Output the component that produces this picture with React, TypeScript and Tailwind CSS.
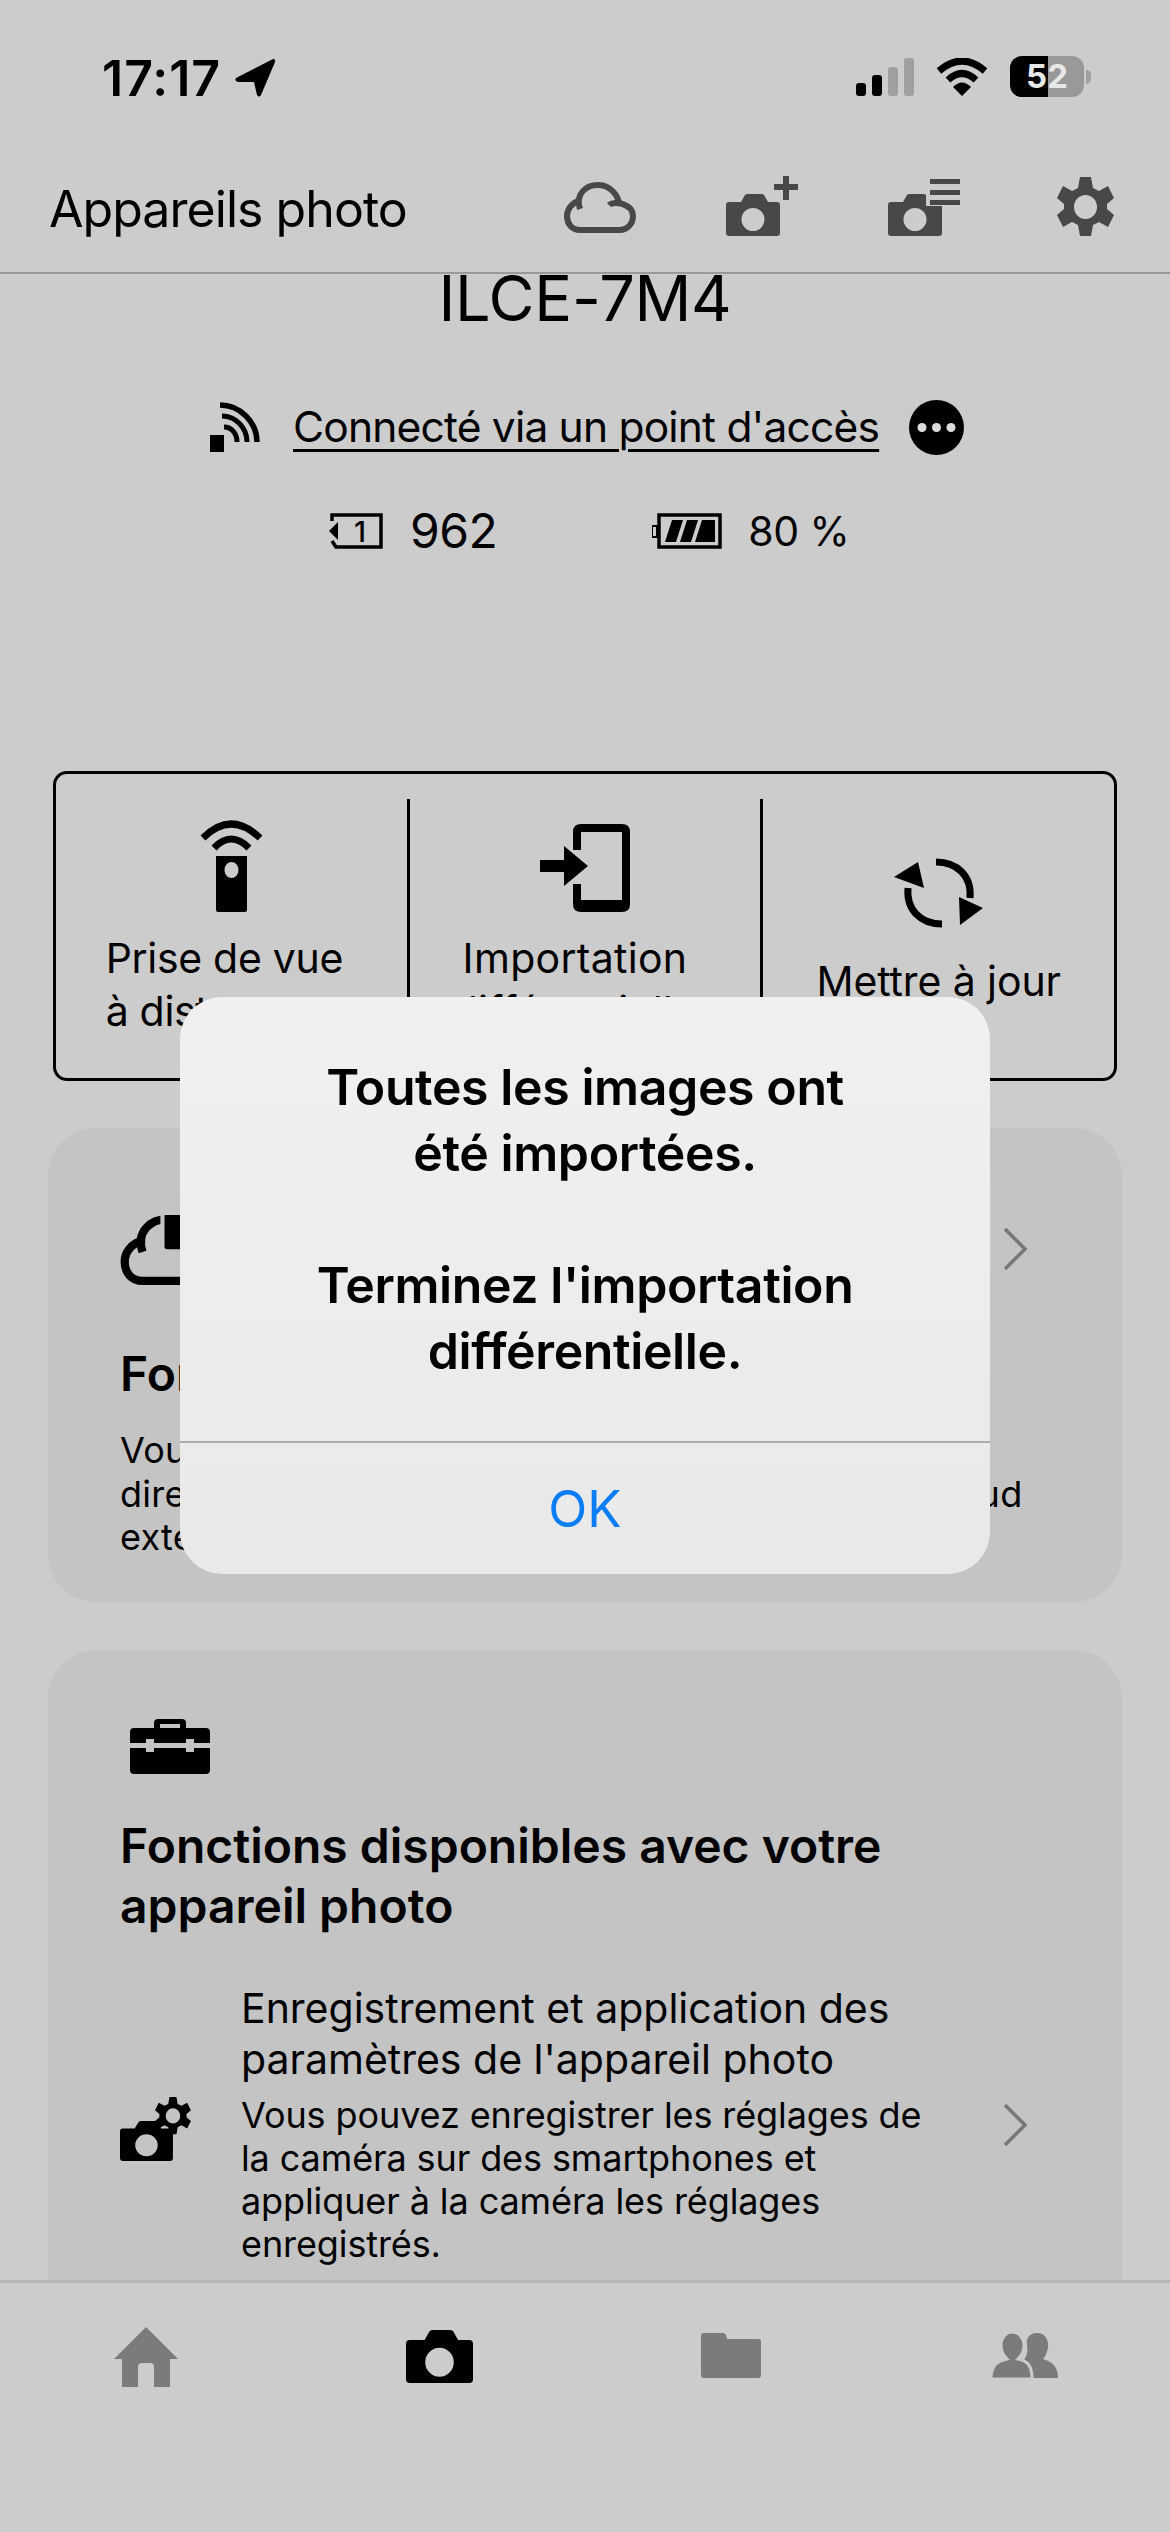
import type { ReactNode } from 'react';

function StatusBar() {
  return (
    <div className="flex h-[156px] items-start justify-between pl-[102px] pr-[79px] pt-[54px]">
      <div className="flex items-center gap-[14px]">
        <span className="text-[50px] font-semibold leading-[48px] tracking-[1px] text-black">17:17</span>
        <svg width="41" height="38" viewBox="0 0 41 38">
          <path d="M38 0 L1 19 Q-1 22 3 23 L19 23 L22 36 Q24 39 26 36 L40 3 Q41 0 38 0Z" fill="#000" />
        </svg>
      </div>
      <div className="flex items-center pt-[2px]">
        <svg width="58" height="38" viewBox="0 0 58 38">
          <rect x="0" y="25" width="10" height="13" rx="3" fill="#000" />
          <rect x="16" y="17" width="10" height="21" rx="3" fill="#000" />
          <rect x="32" y="9" width="10" height="29" rx="3" fill="#a0a0a0" />
          <rect x="48" y="0" width="10" height="38" rx="3" fill="#a0a0a0" />
        </svg>
        <svg className="ml-[22px]" width="52" height="38" viewBox="0 0 52 38">
          <path d="M3 13 Q26 -7 49 13" fill="none" stroke="#000" strokeWidth="7" />
          <path d="M12 22 Q26 9 40 22" fill="none" stroke="#000" strokeWidth="7" />
          <path d="M26 38 L17 29 Q26 20 35 29Z" fill="#000" />
        </svg>
        <div className="relative ml-[22px] flex h-[41px] w-[74px] overflow-hidden rounded-[12px] bg-[#999999]">
          <div className="w-[38px] bg-black" />
          <span className="absolute inset-0 text-center text-[33px] font-bold leading-[41px] text-[#e8e8e8]">52</span>
        </div>
        <div className="ml-[2px] h-[14px] w-[5px] rounded-r-full bg-[#a0a0a0]" />
      </div>
    </div>
  );
}

function CloudShape() {
  return (
    <g fill="none" stroke="currentColor" strokeWidth="6">
      <path d="M45 23 C50 18 69 22 69 34 C69 42 63 48 56 48 H16 C8 48 3 42 3 34 C3 27 8 21 15 19" />
      <path d="M16 27 C11 12 22 3 34 3 C44 3 52 10 55 20" />
    </g>
  );
}

function Camera({ color }: { color: string }) {
  return (
    <path
      fillRule="evenodd"
      fill={color}
      d="M3 8 H15 L19 1 Q20 0 22 0 H35 Q37 0 38 1 L42 8 H51 Q54 8 54 11 V39 Q54 42 51 42 H3 Q0 42 0 39 V11 Q0 8 3 8Z M27 14 A11.5 11.5 0 1 0 27 37 A11.5 11.5 0 1 0 27 14Z"
    />
  );
}

const gearPath =
  'M23 0 H34 L36 11 L42 14 L51 9 L57 21 L50 27 V32 L57 38 L51 50 L42 45 L36 48 L34 59 H23 L21 48 L15 45 L6 50 L0 38 L7 32 V27 L0 21 L6 9 L15 14 L21 11Z M28.5 18 A11.5 12 0 1 0 28.5 42 A11.5 12 0 1 0 28.5 18Z';

function TopBar() {
  return (
    <div className="flex h-[118px] items-start border-b-[2px] border-[#999999] pl-[49px]">
      <span className="w-[358px] whitespace-nowrap pt-[23px] text-[50px] leading-[60px] tracking-[-0.95px] text-black">
        Appareils photo
      </span>
      <div className="ml-[157px] flex items-start text-[#484848]">
        <svg className="mt-[26px]" width="72" height="51" viewBox="0 0 72 51">
          <CloudShape />
        </svg>
        <svg className="ml-[90px] mt-[20px]" width="72" height="60" viewBox="0 0 72 60">
          <g transform="translate(0 18)">
            <Camera color="#484848" />
          </g>
          <path d="M48 8 H72 V14 H63 V24 H57 V14 H48Z M57 0 H63 V8 H57Z" fill="#484848" />
        </svg>
        <svg className="ml-[90px] mt-[23px]" width="72" height="57" viewBox="0 0 72 57">
          <g transform="translate(0 15)">
            <Camera color="#484848" />
          </g>
          <rect x="38" y="0" width="34" height="27" fill="#cccccc" />
          <rect x="42" y="0" width="30" height="5" fill="#484848" />
          <rect x="42" y="11" width="30" height="5" fill="#484848" />
          <rect x="42" y="21" width="30" height="5" fill="#484848" />
        </svg>
        <svg className="ml-[97px] mt-[21px]" width="57" height="59" viewBox="0 0 57 59">
          <path fillRule="evenodd" fill="#484848" d={gearPath} />
        </svg>
      </div>
    </div>
  );
}

function ActionCell({ children, label, labelClass }: { children: ReactNode; label: ReactNode; labelClass: string }) {
  return (
    <div className="flex flex-1 flex-col items-center">
      {children}
      <div className={`text-[41px] leading-[53px] text-black ${labelClass}`}>{label}</div>
    </div>
  );
}

function ActionBox() {
  return (
    <div className="mx-[53px] mt-[211px] flex h-[310px] rounded-[14px] border-[3px] border-black py-[25px]">
      <ActionCell
        labelClass="mr-[14px] text-left tracking-[-0.3px]"
        label={
          <>
            Prise de vue
            <br />à distance
          </>
        }
      >
        <svg className="mb-[20px] mt-[21px]" width="63" height="92" viewBox="0 0 63 92">
          <path d="M3 18 Q31 -10 60 18" fill="none" stroke="#000" strokeWidth="7" />
          <path d="M14 28 Q31 10 49 28" fill="none" stroke="#000" strokeWidth="7" />
          <path
            fillRule="evenodd"
            fill="#000"
            d="M16 36 H47 V90 Q47 92 45 92 H18 Q16 92 16 90Z M31.5 42 A7 8 0 1 0 31.5 58 A7 8 0 1 0 31.5 42Z"
          />
        </svg>
      </ActionCell>
      <div className="w-[3px] bg-black" />
      <ActionCell
        labelClass="mr-[20px] text-center tracking-[0.3px]"
        label={
          <>
            Importation
            <br />
            différentielle
          </>
        }
      >
        <svg className="mb-[20px] mt-[25px]" width="90" height="88" viewBox="0 0 90 88">
          <path d="M33 26 V8 Q33 0 41 0 H82 Q90 0 90 8 V80 Q90 88 82 88 H41 Q33 88 33 80 V60 H41 V76 H82 V8 H41 V26Z" fill="#000" />
          <path d="M0 36 H24 V22 L48 42 L24 62 V48 H0Z" fill="#000" />
        </svg>
      </ActionCell>
      <div className="w-[3px] bg-black" />
      <ActionCell labelClass="text-center tracking-[-0.1px]" label="Mettre à jour">
        <svg className="mb-[27px] mt-[59px]" width="90" height="70" viewBox="0 0 90 70">
          <path d="M42 4 C63 4 78 18 76 40" fill="none" stroke="#000" strokeWidth="7" />
          <path d="M48 66 C27 66 12 52 14 30" fill="none" stroke="#000" strokeWidth="7" />
          <path d="M0 19 L24 4 L30 30Z M89 50 L65 39 L66 67Z" fill="#000" />
        </svg>
      </ActionCell>
    </div>
  );
}

function Chevron({ className }: { className?: string }) {
  return (
    <svg className={className} width="26" height="44" viewBox="0 0 26 44">
      <path d="M3 2 L23 22 L3 42" fill="none" stroke="#777777" strokeWidth="3.5" />
    </svg>
  );
}

function CloudCard() {
  return (
    <div className="mx-[48px] mt-[47px] h-[474px] rounded-[48px] bg-[#c4c4c4] pl-[72px] pr-[94px] pt-[87px]">
      <div className="flex h-[70px] items-start justify-between">
        <svg className="text-black" width="100" height="70" viewBox="0 0 72 51">
          <CloudShape />
          <rect x="29" y="-2" width="20" height="30" fill="#c4c4c4" />
          <rect x="32" y="-1" width="14" height="26" rx="2" fill="#000" />
        </svg>
        <Chevron className="mt-[12px]" />
      </div>
      <h3 className="mt-[60px] text-[48px] font-semibold leading-[58px] text-black">Fonctions de cloud</h3>
      <p className="mt-[26px] whitespace-nowrap text-[36px] leading-[43.5px] tracking-[0.25px] text-black">
        Vous pouvez transférer les images
        <br />
        directement à partir de l'appareil photo vers le cloud
        <br />
        externe.
      </p>
    </div>
  );
}

function FeatureCard() {
  return (
    <div className="mx-[48px] mt-[48px] rounded-[48px] bg-[#c4c4c4] pb-[200px] pl-[72px] pr-[94px] pt-[69px]">
      <svg width="80" height="55" viewBox="0 0 80 55" className="ml-[10px]">
        <path
          fillRule="evenodd"
          fill="#000"
          d="M24 9 V4 Q24 0 28 0 H52 Q56 0 56 4 V9 H76 Q80 9 80 13 V24 H64 V20 H56 V24 H24 V20 H16 V24 H0 V13 Q0 9 4 9Z M30 9 H50 V5 H30Z M0 29 H16 V33 H24 V29 H56 V33 H64 V29 H80 V51 Q80 55 76 55 H4 Q0 55 0 51Z"
        />
      </svg>
      <h3 className="mt-[42px] text-[48px] font-semibold leading-[60px] text-black">
        Fonctions disponibles avec votre
        <br />
        appareil photo
      </h3>
      <div className="mt-[47px] flex items-center">
        <svg className="mt-[8px] shrink-0" width="72" height="64" viewBox="0 0 72 64">
          <g transform="translate(0 24) scale(0.98 0.95)">
            <Camera color="#000" />
          </g>
          <g transform="translate(35 0) scale(0.63)">
            <path fillRule="evenodd" fill="#000" d={gearPath} />
          </g>
        </svg>
        <div className="ml-[49px] flex-1">
          <div className="text-[41px] leading-[51px] text-black">
            Enregistrement et application des
            <br />
            paramètres de l'appareil photo
          </div>
          <p className="mt-[9px] text-[36px] leading-[43px] tracking-[-0.1px] text-black">
            Vous pouvez enregistrer les réglages de
            <br />
            la caméra sur des smartphones et
            <br />
            appliquer à la caméra les réglages
            <br />
            enregistrés.
          </p>
        </div>
        <Chevron className="ml-[20px]" />
      </div>
    </div>
  );
}

function TabBar() {
  return (
    <div className="relative h-[252px] shrink-0 border-t-[3px] border-[#b5b5b5] bg-[#cccccc]">
      <div className="flex items-start pl-[114px] pt-[44px]">
        <svg width="64" height="60" viewBox="0 0 64 60">
          <path
            fillRule="evenodd"
            fill="#7b7b7b"
            d="M32 0 L64 32 H56 V60 H40 V40 Q40 36 36 36 H28 Q24 36 24 40 V60 H8 V32 H0Z"
          />
        </svg>
        <svg className="ml-[228px] mt-[3px]" width="67" height="53" viewBox="0 0 54 42" preserveAspectRatio="none">
          <Camera color="#000" />
        </svg>
        <svg className="ml-[228px] mt-[6px]" width="60" height="45" viewBox="0 0 60 45">
          <path d="M3 0 H22 Q24 0 25 2 L26 6 H57 Q60 6 60 9 V42 Q60 45 57 45 H3 Q0 45 0 42 V3 Q0 0 3 0Z" fill="#7b7b7b" />
        </svg>
        <svg className="ml-[230px] mt-[6px]" width="67" height="45" viewBox="0 0 67 45">
          <path
            fill="#7b7b7b"
            d="M41 45 C41 36 38 31 32 28 C36 24 37 18 36 12 C35 6 38 0 46 0 C55 0 58 8 57 15 C56 20 54 24 52 26 C60 28 67 33 67 45Z"
          />
          <path
            fill="#7b7b7b"
            stroke="#cccccc"
            strokeWidth="3"
            d="M0 46 C0 33 6 28 16 26 C13 23 10 18 10 12 C10 5 15 -1 21 -1 C28 -1 33 5 33 12 C33 18 30 23 27 26 C37 28 41 33 41 46Z"
          />
        </svg>
      </div>
    </div>
  );
}

function AlertOverlay() {
  return (
    <div className="absolute left-[180px] top-[997px] w-[810px] rounded-[42px] bg-gradient-to-b from-[#f0f0f0] to-[#e9e9e9]">
      <div className="h-[444px] pt-[57px] text-center text-[50px] font-semibold leading-[66px] tracking-[-0.4px] text-black">
        Toutes les images ont
        <br />
        été importées.
        <br />
        <br />
        Terminez l'importation
        <br />
        différentielle.
      </div>
      <div className="h-[133px] border-t-[2px] border-[#adadad] pt-[33px] text-center text-[51px] leading-[66px] text-[#0a7df7]">
        OK
      </div>
    </div>
  );
}

export default function App() {
  return (
    <div className="relative flex h-[2532px] w-[1170px] flex-col overflow-hidden bg-[#cccccc] font-[Inter,sans-serif]">
      <StatusBar />
      <TopBar />
      <main className="min-h-0 flex-1">
        <div className="mt-[2px] text-center text-[63px] leading-[44px] tracking-[-0.3px] text-black">ILCE-7M4</div>
        <div className="mt-[78px] flex items-center pl-[210px]">
          <svg width="50" height="50" viewBox="0 0 50 50">
            <rect x="0" y="33" width="14" height="17" fill="#000" />
            <path d="M10 3 C30 3 47 20 47 40" fill="none" stroke="#000" strokeWidth="5.5" />
            <path d="M12 14 C26 14 37 26 37 40" fill="none" stroke="#000" strokeWidth="5" />
            <path d="M14 25 C22 25 27 32 27 40" fill="none" stroke="#000" strokeWidth="5" />
          </svg>
          <span className="ml-[33px] text-[42.5px] leading-[58px] tracking-[-0.8px] text-black underline decoration-[3px] underline-offset-[7px]">
            Connecté via un point d'accès
          </span>
          <svg className="ml-[30px]" width="55" height="55" viewBox="0 0 55 55">
            <circle cx="27.5" cy="27.5" r="27.5" fill="#000" />
            <circle cx="13" cy="27.5" r="4.5" fill="#ddd" />
            <circle cx="27.5" cy="27.5" r="4.5" fill="#ddd" />
            <circle cx="42" cy="27.5" r="4.5" fill="#ddd" />
          </svg>
        </div>
        <div className="mt-[46px] flex items-center pl-[329px]">
          <svg width="54" height="36" viewBox="0 0 54 36">
            <path d="M3 8 V2 H52 V34 H7 L3 28" fill="none" stroke="#000" strokeWidth="3.5" />
            <path d="M0 18 L9 9 V27Z" fill="#000" />
            <text x="31" y="29" textAnchor="middle" fontSize="29" fontWeight="500" fontFamily="Inter, sans-serif" fill="#000">
              1
            </text>
          </svg>
          <span className="ml-[27px] text-[48px] leading-[58px] tracking-[-0.5px] text-black">962</span>
          <svg className="ml-[155px]" width="70" height="36" viewBox="0 0 70 36">
            <rect x="0" y="13" width="5" height="11" fill="none" stroke="#000" strokeWidth="2" />
            <rect x="7" y="2" width="61" height="32" fill="none" stroke="#000" strokeWidth="3.5" />
            <path d="M13 29 L20 7 H31 L24 29Z M28 29 L35 7 H46 L39 29Z M43 29 L50 7 H63 V29Z" fill="#000" />
          </svg>
          <span className="ml-[26px] text-[41px] leading-[58px] tracking-[-0.5px] text-black">80 %</span>
        </div>
        <ActionBox />
        <CloudCard />
        <FeatureCard />
      </main>
      <TabBar />
      <AlertOverlay />
    </div>
  );
}
